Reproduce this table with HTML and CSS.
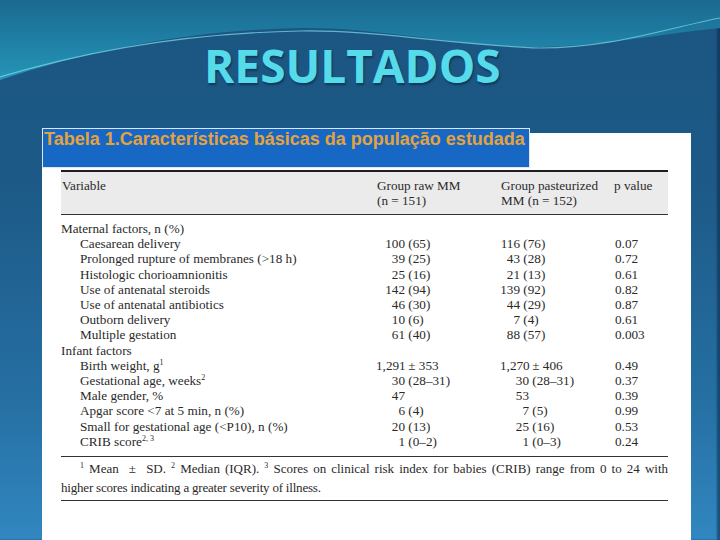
FILE: index.html
```html
<!DOCTYPE html>
<html lang="pt">
<head>
<meta charset="utf-8">
<title>Resultados</title>
<link rel="stylesheet" href="styles.css">
</head>
<body>
<div class="slide">
  <svg class="swoosh" viewBox="0 0 720 110" preserveAspectRatio="none" aria-hidden="true">
    <defs>
      <linearGradient id="sw" x1="0" y1="0" x2="0" y2="1">
        <stop offset="0" stop-color="#1a6990"/>
        <stop offset="1" stop-color="#2595b8"/>
      </linearGradient>
    </defs>
    <path d="M0 0H720V28C660 34 600 46 540 47C450 46 380 27 300 28C190 30 90 50 0 80Z" fill="url(#sw)"/>
    <path d="M0 77C90 50 190 33 300 31C380 30 450 45 540 48C610 48 660 30 720 18" stroke="#7ad6e6" stroke-width="1.2" fill="none" opacity="0.75"/>
  </svg>
  <h1 class="title">RESULTADOS</h1>
  <div class="figure">
    <div class="caption">Tabela 1.Características básicas da população estudada</div>
    <div class="sheet">
      <div class="tbl">
        <div class="head">
          <div>Variable</div>
          <div>Group raw MM<br>(n = 151)</div>
          <div>Group pasteurized<br>MM (n = 152)</div>
          <div>p value</div>
        </div>
        <div class="body">
          <div class="row"><div class="lbl">Maternal factors, n (%)</div><div></div><div></div><div></div></div>
          <div class="row sub"><div class="lbl">Caesarean delivery</div><div class="g1"><span class="n">100</span> (65)</div><div class="g2"><span class="n">116</span> (76)</div><div class="p">0.07</div></div>
          <div class="row sub"><div class="lbl">Prolonged rupture of membranes (&gt;18 h)</div><div class="g1"><span class="n">39</span> (25)</div><div class="g2"><span class="n">43</span> (28)</div><div class="p">0.72</div></div>
          <div class="row sub"><div class="lbl">Histologic chorioamnionitis</div><div class="g1"><span class="n">25</span> (16)</div><div class="g2"><span class="n">21</span> (13)</div><div class="p">0.61</div></div>
          <div class="row sub"><div class="lbl">Use of antenatal steroids</div><div class="g1"><span class="n">142</span> (94)</div><div class="g2"><span class="n">139</span> (92)</div><div class="p">0.82</div></div>
          <div class="row sub"><div class="lbl">Use of antenatal antibiotics</div><div class="g1"><span class="n">46</span> (30)</div><div class="g2"><span class="n">44</span> (29)</div><div class="p">0.87</div></div>
          <div class="row sub"><div class="lbl">Outborn delivery</div><div class="g1"><span class="n">10</span> (6)</div><div class="g2"><span class="n">7</span> (4)</div><div class="p">0.61</div></div>
          <div class="row sub"><div class="lbl">Multiple gestation</div><div class="g1"><span class="n">61</span> (40)</div><div class="g2"><span class="n">88</span> (57)</div><div class="p">0.003</div></div>
          <div class="row"><div class="lbl">Infant factors</div><div></div><div></div><div></div></div>
          <div class="row sub inf"><div class="lbl">Birth weight, g<sup class="sup">1</sup></div><div class="g1"><span class="n">1,291</span> ± 353</div><div class="g2"><span class="n">1,270</span> ± 406</div><div class="p">0.49</div></div>
          <div class="row sub inf"><div class="lbl">Gestational age, weeks<sup class="sup">2</sup></div><div class="g1"><span class="n">30</span> (28–31)</div><div class="g2"><span class="n">30</span> (28–31)</div><div class="p">0.37</div></div>
          <div class="row sub inf"><div class="lbl">Male gender, %</div><div class="g1"><span class="n">47</span></div><div class="g2"><span class="n">53</span></div><div class="p">0.39</div></div>
          <div class="row sub inf"><div class="lbl">Apgar score &lt;7 at 5 min, n (%)</div><div class="g1"><span class="n">6</span> (4)</div><div class="g2"><span class="n">7</span> (5)</div><div class="p">0.99</div></div>
          <div class="row sub inf"><div class="lbl">Small for gestational age (&lt;P10), n (%)</div><div class="g1"><span class="n">20</span> (13)</div><div class="g2"><span class="n">25</span> (16)</div><div class="p">0.53</div></div>
          <div class="row sub inf"><div class="lbl">CRIB score<sup class="sup">2, 3</sup></div><div class="g1"><span class="n">1</span> (0–2)</div><div class="g2"><span class="n">1</span> (0–3)</div><div class="p">0.24</div></div>
        </div>
        <div class="foot">
          <p class="fl1"><sup class="fsup">1</sup> Mean &nbsp;±&nbsp; SD. <sup class="fsup">2</sup> Median (IQR). <sup class="fsup">3</sup> Scores on clinical risk index for babies (CRIB) range from 0 to 24 with</p>
          <p class="fl2">higher scores indicating a greater severity of illness.</p>
        </div>
      </div>
    </div>
  </div>
</div>
</body>
</html>
```

FILE: styles.css
```css
* { box-sizing: border-box; }

body {
  margin: 0;
  background: #1d5a86;
}

.slide {
  position: relative;
  width: 720px;
  height: 540px;
  overflow: hidden;
  background: linear-gradient(180deg, #1b5581 0%, #1d5a87 35%, #2670a4 75%, #3187c0 100%);
  box-shadow: inset -3px 0 2px rgba(10, 40, 70, 0.55);
}

.swoosh {
  position: absolute;
  left: 0;
  top: 0;
  width: 720px;
  height: 110px;
}

.title {
  position: relative;
  margin: 0;
  padding: 42px 0 0 204px;
  font: 700 46px/46px "Open Sans", sans-serif;
  color: #56dbea;
  text-shadow: 1px 2px 2px rgba(0, 25, 50, 0.5);
}

.figure {
  position: relative;
  margin: 45px 0 0 42px;
  width: 649px;
}

.caption {
  position: absolute;
  left: 0;
  top: -5px;
  width: 488px;
  height: 40px;
  background: #1668c4;
  border: 1px solid #dfe8f2;
  padding: 1px 2px 0 1px;
  font: 700 18px/18px "Liberation Sans", Arial, sans-serif;
  color: #e5a23d;
  white-space: nowrap;
}

.sheet {
  background: #fff;
  height: 407px;
  padding: 37px 0 0 19px;
}

.tbl {
  width: 607px;
  font: 13.2px/15.2px "Liberation Serif", "Times New Roman", serif;
  color: #2a2a2a;
}

.head,
.row {
  display: grid;
  grid-template-columns: 315px 124px 113px 55px;
}

.head {
  background: #ebebeb;
  border-top: 2px solid #1e1e1e;
  border-bottom: 1px solid #333;
  padding: 6px 0 7px 1px;
  line-height: 15px;
  height: 45px;
}

.body {
  border-bottom: 1px solid #333;
  padding: 6px 0 7px;
}

.sub .lbl {
  padding-left: 19px;
}

.row .lbl {
  white-space: nowrap;
}

.n {
  display: inline-block;
  text-align: right;
}

.g1 .n { width: 29px; }
.g2 .n { width: 20px; }
.inf .g2 .n { width: 29px; }

.p {
  padding-left: 2px;
}

.sup,
.fsup {
  font-size: 8px;
  line-height: 0;
  vertical-align: 5px;
}

.foot {
  border-bottom: 1px solid #333;
  padding: 2px 0 3px;
  font-size: 13px;
  line-height: 19px;
}

.fl1 {
  margin: 0;
  padding-left: 19px;
  white-space: nowrap;
  text-align: justify;
  text-align-last: justify;
}

.fl2 {
  margin: 0;
  letter-spacing: -0.2px;
}
```
